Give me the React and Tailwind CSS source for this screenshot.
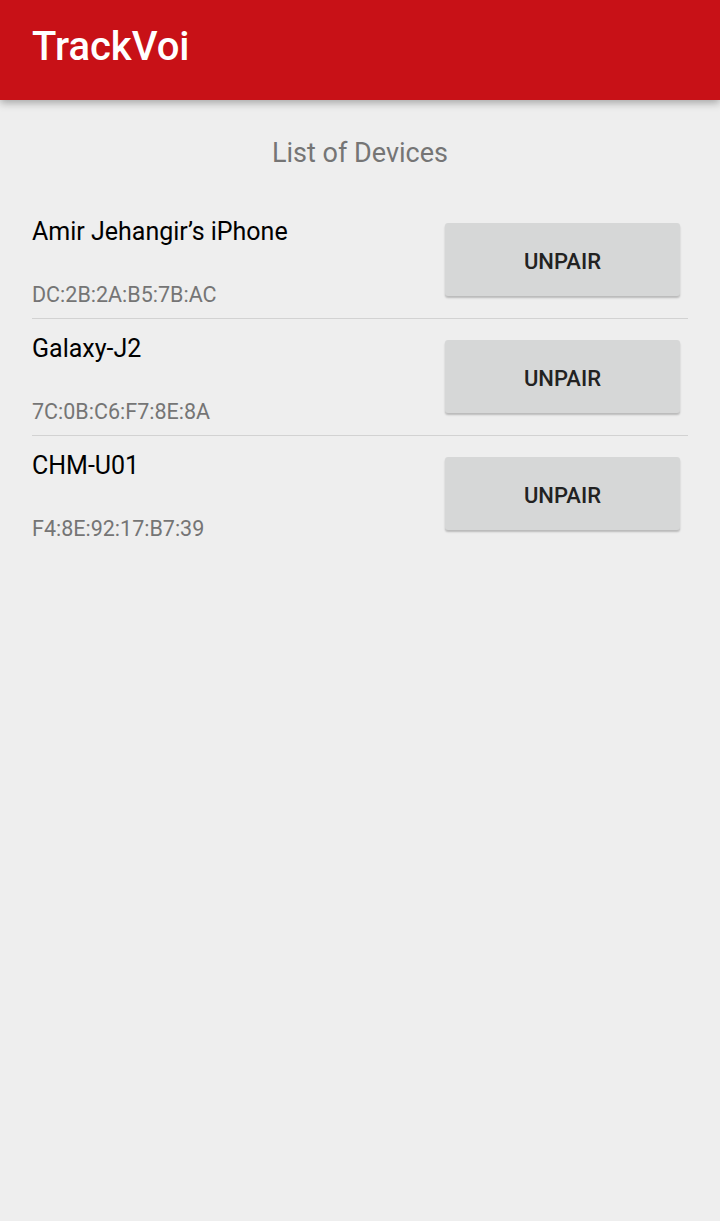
import React from 'react';

const devices = [
  { name: 'Amir Jehangir’s iPhone', mac: 'DC:2B:2A:B5:7B:AC' },
  { name: 'Galaxy-J2', mac: '7C:0B:C6:F7:8E:8A' },
  { name: 'CHM-U01', mac: 'F4:8E:92:17:B7:39' },
];

function DeviceRow({ device, last }) {
  return (
    <div className={`flex items-start justify-between pt-4 pb-[11px] ${last ? '' : 'border-b border-[#d2d2d2]'}`}>
      <div className="flex flex-col">
        <div className="text-[25px] leading-[28px] text-black">{device.name}</div>
        <div className="mt-[37px] text-[21.5px] leading-[24px] text-[#757575]">{device.mac}</div>
      </div>
      <button className="mt-[5px] mr-2 w-[235px] h-[73px] pt-[3px] rounded-[3px] bg-[#d6d7d7] shadow-[0_2px_2px_rgba(0,0,0,0.22)] text-[22px] font-medium text-[#222]">
        UNPAIR
      </button>
    </div>
  );
}

export default function App() {
  return (
    <div className="min-h-[1221px] bg-[#eeeeee] font-['Roboto',sans-serif]">
      <header className="h-[100px] bg-[#c81117] px-8 pt-[23px] shadow-[0_3px_8px_rgba(0,0,0,0.3)] relative">
        <h1 className="text-[40px] leading-[48px] font-medium text-white">TrackVoi</h1>
      </header>
      <div className="pt-[37px] text-center text-[27px] leading-[32px] text-[#757575]">List of Devices</div>
      <div className="mt-[33px] px-8">
        {devices.map((d, i) => (
          <DeviceRow key={d.mac} device={d} last={i === devices.length - 1} />
        ))}
      </div>
    </div>
  );
}
